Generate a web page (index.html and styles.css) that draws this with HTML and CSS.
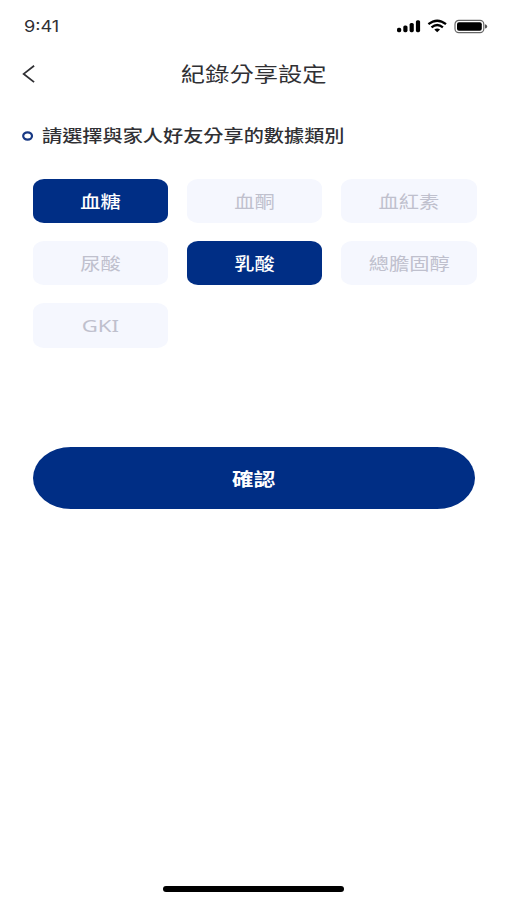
FILE: index.html
```html
<!DOCTYPE html>
<html lang="zh-Hant">
<head>
<meta charset="utf-8">
<title>紀錄分享設定</title>
<link rel="stylesheet" href="styles.css">
</head>
<body>
<div class="screen">
  <div class="status-bar">
    <span class="time wide">9:41</span>
    <svg class="status-icons" width="92" height="16" viewBox="0 0 92 16">
      <rect x="1" y="9.8" width="4.2" height="4.4" rx="1.6"/>
      <rect x="7.3" y="7.4" width="4.2" height="6.8" rx="1.6"/>
      <rect x="13.6" y="5" width="4.2" height="9.2" rx="1.6"/>
      <rect x="19.9" y="2.2" width="4.2" height="12" rx="1.6"/>
      <g class="waves">
        <path d="M32.4 6.2Q41.2-.8 50 6.2"/>
        <path d="M35.5 9.4Q41.2 4.7 46.9 9.4"/>
      </g>
      <path d="M38.3 11.5Q41.2 9.5 44.1 11.5L41.2 14.2Z"/>
      <rect class="battery-outline" x="59" y="2.4" width="28.8" height="12.2" rx="3.8"/>
      <rect x="61" y="4.2" width="24.8" height="8.6" rx="2"/>
      <path class="battery-tip" d="M89 6.3Q91.2 6.7 91.2 8.4Q91.2 10.1 89 10.5Z"/>
    </svg>
  </div>
  <header class="nav">
    <svg class="back" width="14" height="20" viewBox="0 0 14 20"><path d="M12.1 1.7L1.7 9.9L12.1 18.1"/></svg>
    <h1 class="title"><span class="wide">紀錄分享設定</span></h1>
  </header>
  <main class="content">
    <h2 class="prompt">
      <svg class="bullet" width="12" height="10" viewBox="0 0 12 10"><ellipse cx="5.6" cy="5" rx="4.4" ry="3.6"/></svg>
      <span class="prompt-text wide">請選擇與家人好友分享的數據類別</span>
    </h2>
    <div class="chips">
      <button class="chip selected"><span class="wide">血糖</span></button>
      <button class="chip"><span class="wide">血酮</span></button>
      <button class="chip"><span class="wide">血紅素</span></button>
      <button class="chip"><span class="wide">尿酸</span></button>
      <button class="chip selected"><span class="wide">乳酸</span></button>
      <button class="chip"><span class="wide">總膽固醇</span></button>
      <button class="chip latin"><span class="wide">GKI</span></button>
    </div>
    <button class="confirm"><span class="wide">確認</span></button>
  </main>
  <div class="home-indicator"></div>
</div>
</body>
</html>
```
FILE: styles.css
```css
* {
  box-sizing: border-box;
}

body {
  margin: 0;
  background: #fff;
  color: #303034;
  font-family: "Noto Sans CJK TC", sans-serif;
}

button {
  border: 0;
  padding: 0;
  font-family: inherit;
}

.screen {
  display: flex;
  flex-direction: column;
  height: 900px;
  overflow: hidden;
}

/* Extended letterforms */
.wide {
  display: inline-block;
  white-space: nowrap;
  transform: scaleX(1.22);
}

.status-bar {
  display: flex;
  justify-content: space-between;
  align-items: center;
  height: 52px;
  padding: 0 19px 0 23.5px;
}

.time {
  padding-top: 2px;
  font: 400 15.5px/20px Inter, sans-serif;
  transform: scaleX(1.17);
  transform-origin: left;
}

.status-icons {
  fill: #000;
}

.waves {
  fill: none;
  stroke: #000;
  stroke-width: 2.3;
}

.battery-outline {
  fill: none;
  stroke: #666;
  stroke-width: 1.2;
}

.battery-tip {
  fill: #555;
}

.nav {
  display: grid;
  grid-template-columns: 14px 1fr 14px;
  align-items: center;
  height: 44px;
  padding: 0 21px 0 22px;
}

.back {
  fill: none;
  stroke: #303034;
  stroke-width: 1.8;
}

.title {
  margin: 0;
  text-align: center;
  font-size: 19.9px;
  line-height: 28px;
  font-weight: 400;
}

.content {
  padding: 27px 30px 0 33px;
}

.prompt {
  display: flex;
  align-items: center;
  gap: 7.5px;
  height: 25px;
  margin: 0 0 31px -11px;
  font-size: 16.55px;
  line-height: 25px;
  font-weight: 500;
}

.prompt-text {
  transform-origin: left;
}

.bullet {
  fill: none;
  stroke: #173884;
  stroke-width: 2.2;
}

.chips {
  display: grid;
  grid-template-columns: repeat(3, 135.4px);
  grid-auto-rows: 44.2px;
  gap: 18px 18.7px;
}

.chip {
  border-radius: 11px / 9px;
  background: #f5f7fe;
  color: #bfc0cd;
  font-size: 16.6px;
  line-height: 24px;
}

.chip.selected {
  background: #002e85;
  color: #fff;
  font-weight: 500;
}

.chip.latin {
  padding-top: 2px;
  font-family: "Noto Sans", sans-serif;
  font-size: 17px;
}

.latin .wide {
  transform: scaleX(1.3);
}

.confirm {
  display: block;
  width: 442px;
  height: 62px;
  margin-top: 99px;
  border-radius: 38px / 31px;
  background: #002e85;
  color: #fff;
  font-size: 17.7px;
  line-height: 26px;
  font-weight: 700;
}

.home-indicator {
  width: 181px;
  height: 6px;
  margin: auto auto 8.5px;
  border-radius: 3px;
  background: #000;
}
```
